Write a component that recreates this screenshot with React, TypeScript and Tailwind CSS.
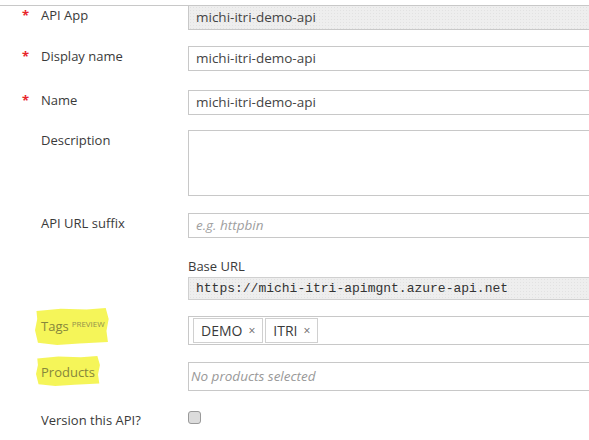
import { ReactNode } from 'react';

const fieldBox = 'h-[25px] w-full border border-[#c8c8c8] px-[7px] flex items-center text-[13.5px] text-[#444]';
const grayFill = 'bg-[#eeeeee] bg-[radial-gradient(#e2e2e2_0.6px,transparent_0.8px)] bg-[length:3px_3px]';

function Row({
  label,
  required,
  children,
  className = '',
}: {
  label?: ReactNode;
  required?: boolean;
  children: ReactNode;
  className?: string;
}) {
  return (
    <div className={`flex ${className}`}>
      <div className="w-[188px] shrink-0 flex pt-[1px] text-[13px] text-[#3a3a3a] leading-[18px]">
        <span className="w-[41px] pl-[22px] text-[#e8262b] font-bold text-[13px]">{required ? '*' : ''}</span>
        <span>{label}</span>
      </div>
      <div className="flex-1 min-w-0 -mr-[20px]">{children}</div>
    </div>
  );
}

function Highlight({ children, className = '' }: { children: ReactNode; className?: string }) {
  return (
    <span className="relative inline-block">
      <span
        className={`absolute bg-[#f3f33c] opacity-85 [clip-path:polygon(2%_8%,35%_2%,70%_4%,96%_0%,100%_30%,97%_62%,99%_92%,60%_96%,30%_100%,4%_94%,0%_60%,3%_30%)] ${className}`}
      />
      <span className="relative text-[#86863c]">{children}</span>
    </span>
  );
}

function Chip({ text }: { text: string }) {
  return (
    <span className="h-[25px] border border-[#d0d0d0] px-[7px] flex items-center gap-[6px] text-[14px] text-[#3a3a3a]">
      {text}
      <span className="text-[12px] text-[#666]">×</span>
    </span>
  );
}

export default function App() {
  return (
    <div
      className="w-[589px] h-[440px] overflow-hidden bg-white pt-[5px]"
      style={{ fontFamily: '"Open Sans", "Noto Sans", sans-serif' }}
    >
      <div className="border-t border-[#c8c8c8]">
        <Row label="API App" required className="-mt-px">
          <div className={`${fieldBox} h-[24px] ${grayFill}`}>michi-itri-demo-api</div>
        </Row>

        <Row label="Display name" required className="mt-[16px]">
          <div className={`${fieldBox} h-[24px]`}>michi-itri-demo-api</div>
        </Row>

        <Row label="Name" required className="mt-[19px]">
          <div className={fieldBox}>michi-itri-demo-api</div>
        </Row>

        <Row label="Description" className="mt-[15px]">
          <div className="h-[66px] w-full border border-[#c8c8c8]" />
        </Row>

        <Row label="API URL suffix" className="mt-[17px]">
          <div className={`${fieldBox} italic text-[#a0a0a0]`}>e.g. httpbin</div>
        </Row>

        <Row className="mt-[19px]">
          <div className="text-[13px] text-[#3a3a3a] leading-[18px]">Base URL</div>
          <div
            className={`mt-[2px] h-[23px] w-full border border-[#d0d0d0] px-[7px] flex items-center text-[13px] text-[#333] ${grayFill}`}
            style={{ fontFamily: '"Liberation Mono", monospace' }}
          >
            https://michi-itri-apimgnt.azure-api.net
          </div>
        </Row>

        <Row
          className="mt-[16px]"
          label={
            <Highlight className="-left-[6px] -right-[4px] -top-[9px] -bottom-[10px]">
              Tags<sup className="ml-[3px] text-[8px] text-[#90904c]">PREVIEW</sup>
            </Highlight>
          }
        >
          <div className="h-[29px] w-full border border-[#c8c8c8] px-[4px] flex items-center gap-[2px]">
            <Chip text="DEMO" />
            <Chip text="ITRI" />
          </div>
        </Row>

        <Row
          className="mt-[17px]"
          label={
            <Highlight className="-left-[5px] -right-[5px] -top-[7px] -bottom-[5px]">Products</Highlight>
          }
        >
          <div className="h-[29px] w-full border border-[#c8c8c8] px-[2px] flex items-center text-[13.5px] italic text-[#999]">
            No products selected
          </div>
        </Row>

        <Row label="Version this API?" className="mt-[19px]">
          <div className="pt-[1px]">
            <div className="w-[13px] h-[13px] rounded-[3px] border border-[#9a9a9a] bg-[#dcdcdc]" />
          </div>
        </Row>
      </div>
    </div>
  );
}
